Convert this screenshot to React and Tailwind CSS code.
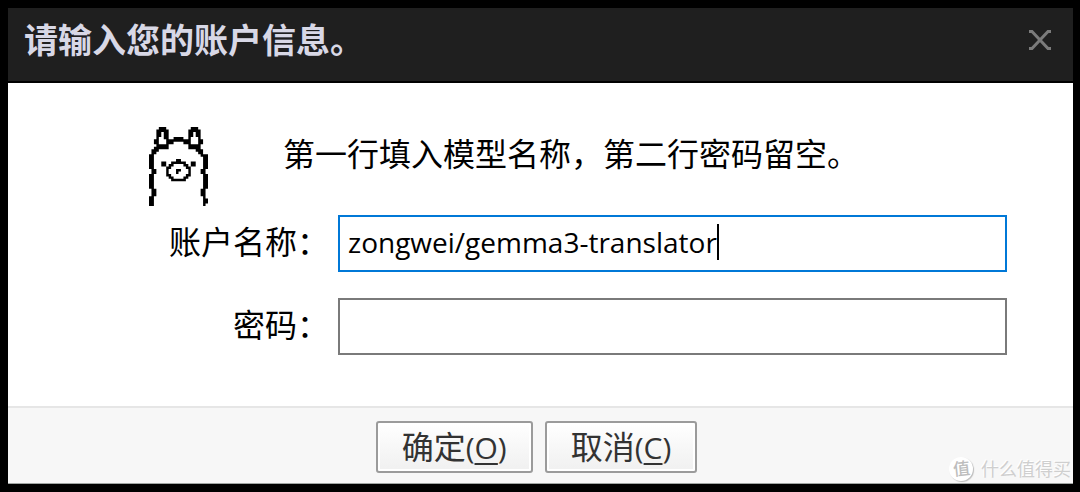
import { useState } from "react";

const LLAMA = [
  "....###..........###....",
  "...#####........#####...",
  "...##.##........##.##...",
  "...##.##........##.##...",
  "...#..##..####..#...#...",
  "..##...##########...##..",
  "..##...###....###...##..",
  "...#####........#####...",
  "..######........#####...",
  ".###...............###..",
  ".##.................##..",
  "##...................###",
  "##....................##",
  "##.........##.........##",
  "##...##..######..##...##",
  "##...##.##....##.##...##",
  "##.....##......##.....##",
  ".##....#...##...#....##.",
  ".##....#...#....#....##.",
  "##.....##......##.....##",
  "##......##....##......##",
  "##.......######.......##",
  "##....................##",
  "##....................##",
  "##....................##",
  ".##..................##.",
  ".##..................##.",
  ".##..................##.",
  "##....................#.",
  "##....................##",
  "##....................##",
  "##....................#.",
];

function LlamaIcon() {
  const d = LLAMA.flatMap((row, y) =>
    [...row.matchAll(/#+/g)].map((m) => `M${m.index} ${y}h${m[0].length}v1h-${m[0].length}z`)
  ).join("");
  return (
    <svg viewBox="0 0 24 32" className="h-[79px] w-[59px]" preserveAspectRatio="none" aria-hidden="true">
      <path d={d} />
    </svg>
  );
}

function DialogButton({ label, hotkey }) {
  return (
    <button
      type="button"
      className="h-[52px] rounded-[3px] border-2 border-[#9b9b9b] bg-linear-to-b from-white to-[#f0f0f0] px-6 text-[32px] leading-[46px] text-[#333] shadow-[inset_0_0_0_2px_#fff]"
    >
      {label}
      <span className="text-[30px]">
        (<span className="underline decoration-2 underline-offset-4">{hotkey}</span>)
      </span>
    </button>
  );
}

export default function App() {
  const [account, setAccount] = useState("zongwei/gemma3-translator");
  const [password, setPassword] = useState("");

  return (
    <main className="flex min-h-screen flex-col bg-black p-2 pr-[7px] font-['Open_Sans','Noto_Sans_CJK_SC',sans-serif] text-black">
      <header className="flex h-[73px] items-center justify-between bg-[#1f1f1f] pr-[21px] pb-[10px] pl-4">
        <h1 className="text-[34px] leading-10 font-bold text-[#d8d8e6]">请输入您的账户信息。</h1>
        <button type="button" aria-label="关闭" className="p-px">
          <svg viewBox="0 0 22 20" className="h-5 w-[22px]" fill="none" stroke="#7b7b7b" strokeWidth="3" aria-hidden="true">
            <path d="M0 1.5H3L19 18.5H22M22 1.5H19L3 18.5H0" />
          </svg>
        </button>
      </header>

      <form className="mt-0.5 flex grow flex-col bg-white">
        <div className="grid grow grid-cols-[321px_1fr] content-start items-center gap-x-[9px] pt-11 pr-[66px]">
          <div className="flex h-[88px] items-start justify-end pr-[121px]">
            <LlamaIcon />
          </div>
          <p className="-ml-[55px] h-[88px] pt-[3px] text-[32px] leading-12 whitespace-nowrap">
            第一行填入模型名称，第二行密码留空。
          </p>

          <label htmlFor="account" className="pb-1 text-right text-[32px] leading-12 whitespace-nowrap">
            账户名称：
          </label>
          <div className="flex h-[57px] items-center border-2 border-[#0078d7] pb-1 pl-2">
            <input
              id="account"
              type="text"
              value={account}
              onChange={(e) => setAccount(e.target.value)}
              className="field-sizing-content text-[28px] leading-10 caret-transparent outline-none"
            />
            <span className="h-9 w-0.5 bg-black" />
          </div>

          <label htmlFor="password" className="mt-[26px] pb-1 text-right text-[32px] leading-12 whitespace-nowrap">
            密码：
          </label>
          <input
            id="password"
            type="password"
            value={password}
            onChange={(e) => setPassword(e.target.value)}
            className="mt-[26px] h-[57px] w-full border-2 border-[#7a7a7a] px-2 text-[28px] outline-none"
          />
        </div>

        <footer className="relative flex h-[78px] items-start justify-center gap-3 border-t-2 border-b border-t-[#e6e6e6] border-b-[#a0a5a3] bg-[#f7f7f7] pt-[13px] pr-2">
          <DialogButton label="确定" hotkey="O" />
          <DialogButton label="取消" hotkey="C" />
          <div className="absolute right-0.5 bottom-0.5 flex items-center gap-2 text-[#cfcfcf]">
            <span className="flex size-6 items-center justify-center rounded-full bg-white text-[17px] leading-6 font-medium text-[#bdbdbd] shadow-[1px_1px_1px_#bbb]">
              <span className="-rotate-6">值</span>
            </span>
            <span className="text-[18px] leading-6 [text-shadow:-1px_-1px_0_#fff]">什么值得买</span>
          </div>
        </footer>
      </form>
    </main>
  );
}
